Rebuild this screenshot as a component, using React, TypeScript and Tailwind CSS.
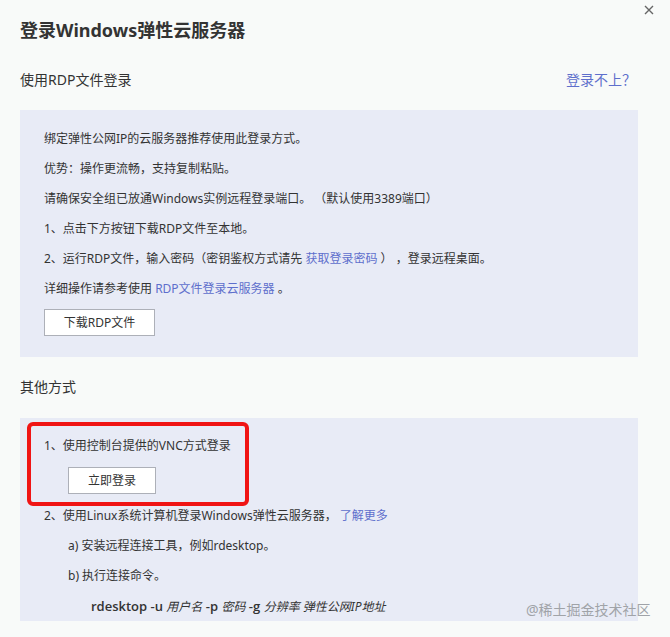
import React from "react";

const font = { fontFamily: '"Noto Sans", "Noto Sans CJK SC", sans-serif' };

export default function App() {
  return (
    <div
      className="relative w-[670px] h-[637px] overflow-hidden bg-[#f8faf9] pl-5 pr-[32px] text-[#333]"
      style={font}
    >
      <svg className="absolute left-[644px] top-[5px]" width="10" height="10" viewBox="0 0 10 10">
        <path d="M1 1L9 9M9 1L1 9" stroke="#666" strokeWidth="1.4" />
      </svg>
      <div className="pt-[18px] h-[42px] text-[18px] leading-6 font-bold text-[#333]">
        登录Windows弹性云服务器
      </div>
      <div className="mt-[28px] flex h-5 items-center justify-between text-[14px] leading-5">
        <span>使用RDP文件登录</span>
        <span className="pr-[2px] text-[#5e6fcc]">登录不上？</span>
      </div>
      <div className="mt-5 h-[247px] bg-[#e8ebf6] pl-6 pt-[14px] text-[12px]">
        <div className="h-[30px] leading-[30px]">绑定弹性公网IP的云服务器推荐使用此登录方式。</div>
        <div className="h-[30px] leading-[30px]">优势：操作更流畅，支持复制粘贴。</div>
        <div className="h-[30px] leading-[30px]">请确保安全组已放通Windows实例远程登录端口。 （默认使用3389端口）</div>
        <div className="h-[30px] leading-[30px]">1、点击下方按钮下载RDP文件至本地。</div>
        <div className="h-[30px] leading-[30px]">
          2、运行RDP文件，输入密码（密钥鉴权方式请先 <span className="text-[#5e6fcc]">获取登录密码</span> ） ，登录远程桌面。
        </div>
        <div className="h-[30px] leading-[30px]">
          详细操作请参考使用 <span className="text-[#5e6fcc]">RDP文件登录云服务器</span> 。
        </div>
        <div className="mt-[5px] flex h-[27px] w-[111px] items-center justify-center border border-[#adb0b8] bg-white text-[12px]">
          下载RDP文件
        </div>
      </div>
      <div className="mt-5 h-5 text-[14px] leading-5">其他方式</div>
      <div className="relative mt-[21px] h-[203px] bg-[#e8ebf6] pl-6 pt-[13px] text-[12px]">
        <div className="h-[30px] leading-[30px]">1、使用控制台提供的VNC方式登录</div>
        <div className="ml-6 mt-[6px] flex h-[27px] w-[88px] items-center justify-center border border-[#adb0b8] bg-white">
          立即登录
        </div>
        <div className="mt-[7px] h-[30px] leading-[30px]">
          2、使用Linux系统计算机登录Windows弹性云服务器， <span className="text-[#5e6fcc]">了解更多</span>
        </div>
        <div className="ml-6 h-[30px] leading-[30px]">a) 安装远程连接工具，例如rdesktop。</div>
        <div className="ml-6 h-[30px] leading-[30px]">b) 执行连接命令。</div>
        <div className="ml-[47px] h-[30px] leading-[30px] text-[13px]">
          <span className="font-semibold" style={{ fontFamily: '"Open Sans", "Noto Sans CJK SC", sans-serif' }}>rdesktop -u</span>{" "}
          <span className="italic text-[12px]">用户名</span>{" "}
          <span className="font-semibold" style={{ fontFamily: '"Open Sans", sans-serif' }}>-p</span>{" "}
          <span className="italic text-[12px]">密码</span>{" "}
          <span className="font-semibold" style={{ fontFamily: '"Open Sans", sans-serif' }}>-g</span>{" "}
          <span className="italic text-[12px]">分辨率 弹性公网IP地址</span>
        </div>
        <div className="absolute left-[7px] top-[4px] h-[84px] w-[222px] rounded-md border-4 border-[#f01414]" />
      </div>
      <div className="absolute left-[526px] top-[600px] text-[14px] leading-5 text-[#a0a3a8]">
        @稀土掘金技术社区
      </div>
    </div>
  );
}
